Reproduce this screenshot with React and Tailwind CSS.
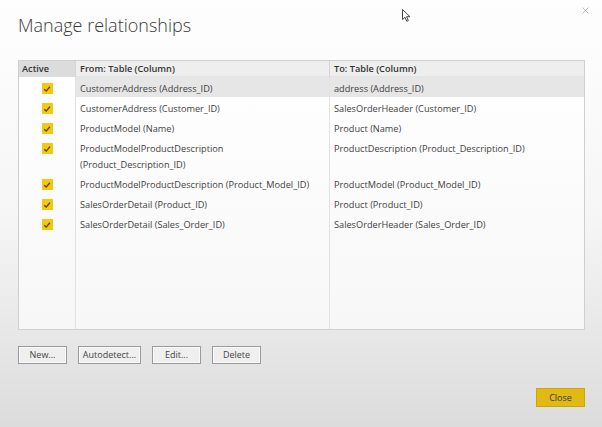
import { X } from 'lucide-react'

const rows = [
  { from: 'CustomerAddress (Address_ID)', to: 'address (Address_ID)', selected: true },
  { from: 'CustomerAddress (Customer_ID)', to: 'SalesOrderHeader (Customer_ID)' },
  { from: 'ProductModel (Name)', to: 'Product (Name)' },
  { from: 'ProductModelProductDescription (Product_Description_ID)', to: 'ProductDescription (Product_Description_ID)' },
  { from: 'ProductModelProductDescription (Product_Model_ID)', to: 'ProductModel (Product_Model_ID)' },
  { from: 'SalesOrderDetail (Product_ID)', to: 'Product (Product_ID)' },
  { from: 'SalesOrderDetail (Sales_Order_ID)', to: 'SalesOrderHeader (Sales_Order_ID)' },
]

function Check() {
  return (
    <span className="flex h-[11px] w-[11px] items-center justify-center bg-[#f2c811]">
      <svg width="8" height="8" viewBox="0 0 8 8">
        <path d="M1.2 4.2 L3.2 6.1 L6.9 1.8" fill="none" stroke="#5a4a00" strokeWidth="1.4" />
      </svg>
    </span>
  )
}

function Btn({ children, className = '' }) {
  return (
    <button className={`h-[18px] border border-[#9a9a9a] bg-[#efefef] text-[9px] text-[#444] shadow-[inset_0_0_0_1px_#fafafa] ${className}`}>
      {children}
    </button>
  )
}

export default function App() {
  return (
    <div
      className="relative flex h-[427px] w-[602px] flex-col bg-gradient-to-b from-[#fefefe] via-[#f6f6f6] to-[#dcdcdc] px-[18px]"
      style={{ fontFamily: '"Open Sans", "Noto Sans", sans-serif' }}
    >
      <X size={11} strokeWidth={1} className="absolute right-[11px] top-[5px] text-[#666]" />
      <svg className="absolute left-[402px] top-[9px]" width="9" height="13" viewBox="0 0 9 13">
        <path d="M0.5 0.5 L0.5 10.5 L3 8.3 L4.8 12.3 L6.3 11.6 L4.6 7.7 L8 7.7 Z" fill="#fff" stroke="#333" strokeWidth="0.9" />
      </svg>

      <h1 className="mt-[12px] text-[18px] font-light leading-[26px] text-[#3a3a3a]">
        Manage relationships
      </h1>

      <div className="mt-[22px] flex h-[270px] w-[567px] flex-col border border-[#cfcfcf] bg-gradient-to-b from-white to-[#f7f7f7] text-[9.2px] text-[#3f3f3f]">
        <div className="grid h-[16px] grid-cols-[56px_254px_1fr] border-b border-[#e4e4e4] bg-[#eeeeee] font-semibold leading-[16px] text-[#333]">
          <div className="bg-[#dcdcdc] pl-[3px]">Active</div>
          <div className="border-l border-[#d6d6d6] pl-[4px]">From: Table (Column)</div>
          <div className="border-l border-[#d6d6d6] pl-[4px]">To: Table (Column)</div>
        </div>

        {rows.map((r, i) => (
          <div key={i} className="grid grid-cols-[56px_254px_1fr] leading-[16px]">
            <div className="flex justify-center pt-[6px]">
              <Check />
            </div>
            <div className={`border-l border-[#e2e2e2] pt-[4px] pl-[4px] pr-[4px] ${r.selected ? 'bg-[#e6e6e6]' : ''}`}>
              {r.from}
            </div>
            <div className={`border-l border-[#e2e2e2] pt-[4px] pl-[4px] ${r.selected ? 'bg-[#e6e6e6]' : ''}`}>
              {r.to}
            </div>
          </div>
        ))}

        <div className="grid flex-1 grid-cols-[56px_254px_1fr]">
          <div />
          <div className="border-l border-[#e2e2e2]" />
          <div className="border-l border-[#e2e2e2]" />
        </div>
      </div>

      <div className="mt-[16px] flex gap-[11px]">
        <Btn className="w-[49px]">New...</Btn>
        <Btn className="w-[63px]">Autodetect...</Btn>
        <Btn className="w-[49px]">Edit...</Btn>
        <Btn className="w-[49px]">Delete</Btn>
      </div>

      <div className="mt-[24px] flex w-[567px] justify-end">
        <button className="h-[19px] w-[49px] border border-[#c9a800] bg-[#e2b813] text-[9px] text-[#3a3a3a]">
          Close
        </button>
      </div>
    </div>
  )
}
